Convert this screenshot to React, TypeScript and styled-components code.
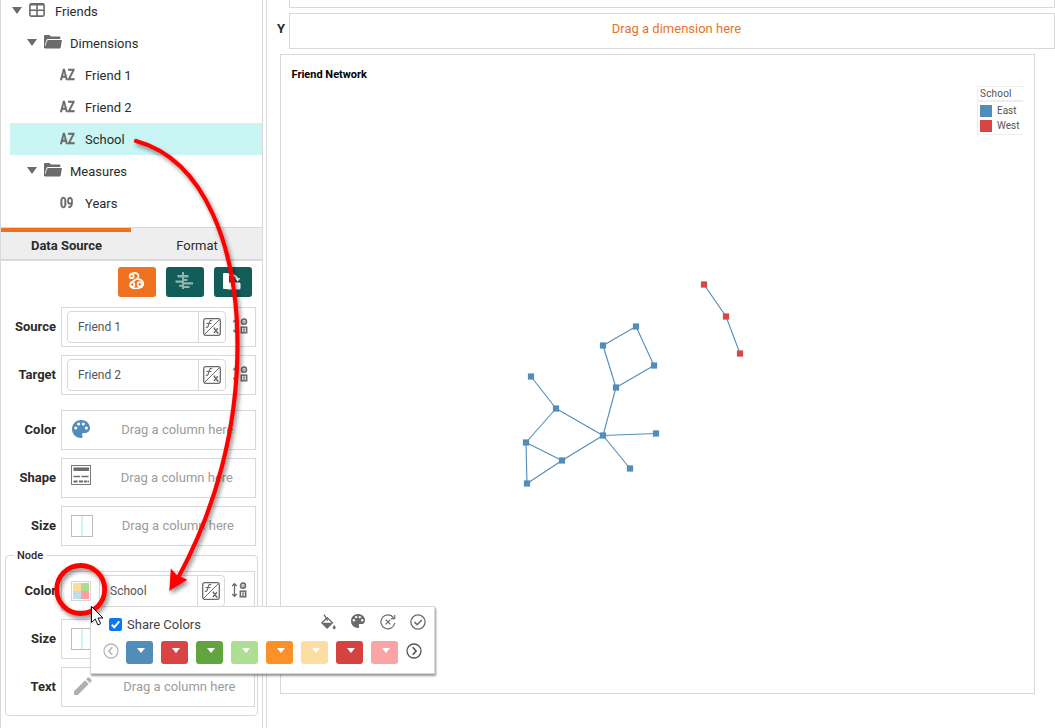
import React from "react";
import styled, { createGlobalStyle, css } from "styled-components";

const line = "#d9d9d9";
const grey = "#6b6b6b";
const blue = "#518db9";
const red = "#d74644";

const GlobalStyle = createGlobalStyle`
  * { box-sizing: border-box; }
  body {
    margin: 0;
    overflow: hidden;
    background: #fff;
    color: #2b2b2b;
    font: 13px/16px Roboto, "Liberation Sans", sans-serif;
  }
  svg { display: block; flex: none; }
`;

const Page = styled.div`
  position: relative;
  display: flex;
  width: 1055px;
  height: 728px;
  overflow: hidden;
`;

const Sidebar = styled.aside`
  width: 263px;
  height: 728px;
  flex: none;
  border: solid ${line};
  border-width: 0 1px;
  overflow: hidden;
`;

const Tree = styled.div`
  height: 227px;
  padding-left: 9px;
  overflow: hidden;
`;

const TreeList = styled.div`
  margin-top: -5px;
`;

const TreeRow = styled.div<{ $level: number; $selected?: boolean }>`
  display: flex;
  align-items: center;
  height: 32px;
  padding-left: ${(p) => [2, 17, 50][p.$level]}px;
  background: ${(p) => (p.$selected ? "#caf5f5" : "transparent")};
`;

const Twisty = styled.span`
  width: 10px;
  height: 7px;
  margin: 0 7px 1px 0;
  flex: none;
  background: ${grey};
  clip-path: polygon(0 0, 100% 0, 50% 100%);
`;

const TreeIcon = styled.span`
  margin-bottom: 2px;
`;

const TreeText = styled.span<{ $gap: number }>`
  margin-left: ${(p) => p.$gap}px;
  padding-top: 1px;
`;

const TypeMark = styled.span`
  width: 25px;
  flex: none;
  color: ${grey};
  font-size: 14px;
  font-weight: 700;
  transform: scaleX(0.83);
  transform-origin: 0 50%;
  -webkit-text-stroke: 0.3px ${grey};
`;

const Tabs = styled.div`
  display: flex;
  height: 34px;
  border: solid ${line};
  border-width: 1px 0 2px;
  background: #eee;
`;

const Tab = styled.div<{ $active?: boolean }>`
  width: ${(p) => (p.$active ? 130 : 131)}px;
  padding-top: ${(p) => (p.$active ? 6 : 10)}px;
  padding-left: 1px;
  text-align: center;
  ${(p) =>
    p.$active &&
    css`
      border-top: 4px solid #ef711d;
      font-weight: 700;
    `}
`;

const ButtonBar = styled.div`
  display: flex;
  justify-content: flex-end;
  gap: 10px;
  padding: 6px 10px 10px 0;
`;

const ToolButton = styled.button<{ $primary?: boolean }>`
  display: flex;
  align-items: center;
  justify-content: center;
  width: 38px;
  height: 30px;
  padding: 0 2px 2px 0;
  border: 0;
  border-radius: 3px;
  background: ${(p) => (p.$primary ? "#ee7220" : "#125d57")};
`;

const FieldStack = styled.div<{ $top?: number }>`
  display: flex;
  flex-direction: column;
  gap: 8px;
  margin-top: ${(p) => p.$top ?? 0}px;
`;

const FieldRow = styled.div`
  display: flex;
  align-items: center;
  height: 40px;
`;

const FieldLabel = styled.label<{ $width: number }>`
  width: ${(p) => p.$width}px;
  padding-right: 5px;
  flex: none;
  font-weight: 700;
  text-align: right;
`;

const DropBox = styled.div<{ $width: number; $filled?: boolean }>`
  display: flex;
  align-items: center;
  width: ${(p) => p.$width}px;
  height: 40px;
  padding-left: ${(p) => (p.$filled ? 5 : 9)}px;
  border: 1px solid ${line};
`;

const FieldIcon = styled.span<{ $left: number; $lift: number }>`
  margin: 0 0 ${(p) => p.$lift * 2}px ${(p) => p.$left}px;
`;

const Placeholder = styled.span<{ $right: number }>`
  margin-left: auto;
  margin-right: ${(p) => p.$right}px;
  color: #9c9c9c;
`;

const ColumnBox = styled.div`
  display: flex;
  width: 159px;
  height: 32px;
  border: 1px solid ${line};
  border-radius: 4px;
`;

const ColumnName = styled.span`
  width: 131px;
  padding: 7px 0 0 10px;
  border-right: 1px solid ${line};
  color: #555;
  font-size: 12px;
`;

const FxSlot = styled.span`
  display: flex;
  flex: 1;
  align-items: center;
  justify-content: center;
`;

const SortSlot = styled.span`
  margin: 0 0 2px 7px;
`;

const NodeGroup = styled.section`
  width: 253px;
  height: 161px;
  margin: 9px 0 0 4px;
  border: 1px solid ${line};
  border-radius: 4px;
`;

const NodeLegend = styled.h3`
  width: 33px;
  height: 14px;
  margin: -7px 0 0 8px;
  padding-left: 3px;
  background: #fff;
  font-size: 11px;
  font-weight: 500;
  line-height: 14px;
`;

const NodeColumn = styled(ColumnBox)`
  width: 126px;
`;

const NodeColumnName = styled(ColumnName)`
  width: 98px;
  padding-left: 10px;
`;

const PaletteSlot = styled.span`
  width: 32px;
  padding-left: 4px;
  flex: none;
`;

const Main = styled.main`
  display: flex;
  flex-direction: column;
  width: 789px;
  height: 728px;
  margin-left: 3px;
  border-left: 1px solid ${line};
`;

const ShelfX = styled.div`
  height: 8px;
  margin-left: 22px;
  border: solid ${line};
  border-width: 0 1px 1px;
`;

const ShelfRow = styled.div`
  display: flex;
  align-items: center;
  height: 36px;
  margin-top: 5px;
`;

const ShelfLabel = styled.b`
  width: 22px;
  padding: 0 0 5px 10px;
`;

const Shelf = styled.div`
  flex: 1;
  height: 36px;
  padding-top: 7px;
  border: 1px solid ${line};
  color: #e8731f;
  text-align: center;
  padding-left: 9px;
`;

const Chart = styled.section`
  position: relative;
  width: 755px;
  height: 640px;
  margin: 5px 0 0 13px;
  border: 1px solid ${line};
`;

const ChartTitle = styled.h2`
  height: 38px;
  margin: 0;
  padding: 12px 0 0 10.5px;
  color: #000;
  font-size: 11px;
  font-weight: 700;
  line-height: 16px;
`;

const Legend = styled.div`
  position: absolute;
  top: 31px;
  left: 696px;
  width: 46px;
  height: 49px;
  border: solid #eee;
  border-width: 1px 0 1px 1px;
  color: #555;
  font-size: 10px;
  line-height: 13px;
`;

const LegendTitle = styled.div`
  height: 15px;
  padding-left: 2px;
  border-bottom: 2px solid #eee;
  letter-spacing: 0.2px;
`;

const LegendItem = styled.div`
  display: flex;
  align-items: center;
  gap: 5px;
  height: 15px;
  padding-left: 2px;
`;

const LegendKey = styled.i<{ $color: string }>`
  width: 12px;
  height: 12px;
  background: ${(p) => p.$color};
`;

const LegendItems = styled.div`
  padding-top: 1px;
`;

const Popup = styled.div`
  position: absolute;
  left: 90px;
  top: 606px;
  width: 345px;
  height: 68px;
  border: 1px solid ${line};
  background: #fff;
  box-shadow: 1px 2px 2px rgba(0, 0, 0, 0.4);
`;

const PopupTop = styled.div`
  display: flex;
  align-items: center;
  height: 32px;
  padding: 2px 8px 0 18px;
`;

const CheckBox = styled.span`
  width: 13px;
  height: 13px;
  border-radius: 2px;
  background: #0b76f5;
  margin-top: 1px;
`;

const ShareText = styled.span`
  margin-left: 5px;
  padding-top: 2px;
  color: #444;
`;

const PopupIcons = styled.div`
  display: flex;
  gap: 14px;
  margin: -5px 0 0 auto;
`;

const PopupPalette = styled.span`
  width: 16px;
  padding-left: 1px;
`;

const SwatchRow = styled.div`
  display: flex;
  gap: 8px;
  padding: 2px 0 0 12px;
`;

const Swatch = styled.button<{ $color: string }>`
  display: flex;
  align-items: flex-start;
  width: 27px;
  height: 23px;
  padding: 7px 0 0 11px;
  border: 0;
  border-radius: 3px;
  background: ${(p) => p.$color};
  &::after {
    content: "";
    width: 8px;
    height: 5px;
    background: #fff;
    clip-path: polygon(0 0, 100% 0, 50% 100%);
  }
`;

const Pager = styled.span`
  width: 15px;
  padding-top: 2px;
`;

const Annotations = styled.svg`
  position: absolute;
  left: 0;
  top: 0;
  pointer-events: none;
`;

const TableIcon = () => (
  <svg width="16" height="14" viewBox="0 0 16 14" fill="none" stroke={grey} strokeWidth="1.6">
    <rect x=".9" y=".9" width="14.2" height="12.2" rx="1.3" />
    <path d="M1 1.7h14" strokeWidth="1.6" />
    <path d="M8 1v12M1 7.2h14" />
  </svg>
);

const FolderIcon = () => (
  <svg width="18" height="14" viewBox="0 0 18 14" fill={grey}>
    <path d="M0 13V1Q0 0 1 0H5.500L7 1.500H15.500Q16.300 1.500 16.300 2.400V4H4Q3 4 2.600 5L1 9.500V13Z" />
    <path d="M4.200 4.900H17.900L16.700 12.600Q16.500 13.600 15.500 13.600H1.200Q.2 13.600.7 12.500L3.300 5.600Q3.600 4.900 4.200 4.900Z" />
  </svg>
);

const FxIcon = () => (
  <svg width="18" height="18" viewBox="0 0 18 18" fill="none" stroke={grey}>
    <rect x=".7" y=".7" width="16.6" height="16.6" rx="2" strokeWidth="1.3" />
    <path d="M1.5 16.5 16.5 1.5" strokeWidth="1" />
    <path d="M9.2 2.6q-2.200-.6-2.800 1.600L5.200 8.200Q4.800 9.700 2.900 9.300M3.500 5.500h5" strokeWidth="1.2" />
    <path d="m11.200 10.300 3.500 4.700M14.900 10.300l-4 4.700M10.500 10.300h1.700M13.800 15h1.800" strokeWidth="1.4" />
  </svg>
);

const SortIcon = () => (
  <svg width="16" height="16" viewBox="0 0 16 16" fill="none" stroke={grey}>
    <path d="M2.500 2v12M.2 4 2.500 1.700 4.800 4M.2 12l2.300 2.300L4.800 12" strokeWidth="1.3" />
    <rect x="8.600" y="1.200" width="4.800" height="5" rx="2.200" strokeWidth="1.7" />
    <path d="M11 2.600v2.300" strokeWidth="1" />
    <rect x="8.300" y="9.200" width="5.400" height="5.600" strokeWidth="1.5" />
    <path d="M9.700 10.900h2.400v1.200h-1.800v1.300h2" strokeWidth=".8" />
  </svg>
);

const PaletteIcon = ({ size = 18, color = blue }: { size?: number; color?: string }) => (
  <svg width={size} height={size} viewBox="0 0 18 18">
    <path
      fill={color}
      d="M9 0C4 0 0 4 0 9s4 9 9 9c1 0 1.6-.7 1.6-1.6 0-.9-.6-1.2-.6-2 0-.9.7-1.5 1.5-1.5h2c2.5 0 4.5-2 4.5-4.7C18 3.500 14 0 9 0Z"
    />
    <g fill="#fff">
      <circle cx="3.700" cy="8" r="1.500" />
      <circle cx="6.600" cy="4" r="1.500" />
      <circle cx="11.300" cy="4" r="1.500" />
      <circle cx="14.400" cy="8" r="1.500" />
    </g>
  </svg>
);

const ShapeIcon = () => (
  <svg width="20" height="20" viewBox="0 0 20 20" fill="none" stroke={grey}>
    <rect x=".5" y=".5" width="19" height="19" stroke="#777" />
    <path d="M2.500 4.200h15.500" strokeWidth="3.500" />
    <path d="M2.500 11.500h6.500M10.500 11.500h7" strokeWidth="1.600" />
    <path d="M2.500 16.500h4M8 16.500h4M13 16.500h2.800M16.500 16.500h1.400" strokeWidth="1.800" />
  </svg>
);

const SizeIcon = () => (
  <svg width="22" height="22" viewBox="0 0 22 22">
    <rect x=".5" y=".5" width="21" height="21" fill="#fff" stroke="#bdbdbd" />
    <path d="M11 1v20" stroke="#caf5f5" strokeWidth="2" />
  </svg>
);

const PencilIcon = () => (
  <svg width="18" height="18" viewBox="0 0 20 20" fill="#b0b0b0">
    <path d="M0 20v-4.200L12.300 3.500l4.200 4.200L4.200 20ZM13.400 2.400l1.600-1.600q1.100-1 2.200 0l2 2q1 1.100 0 2.200L17.600 6.600Z" />
  </svg>
);

const QuadIcon = () => (
  <svg width="20" height="20" viewBox="0 0 20 20">
    <rect x=".5" y=".5" width="19" height="19" fill="#fff" stroke="#d5d5d5" />
    <path d="M2 2h8v8H2Z" fill="#fddb98" />
    <path d="M10 2h8v8h-8Z" fill="#abdd8f" />
    <path d="M2 10h8v8H2Z" fill="#bedeea" />
    <path d="M10 10h8v8h-8Z" fill="#fc9f9e" />
  </svg>
);

const NetworkIcon = () => (
  <svg width="18" height="18" viewBox="0 0 18 18" fill="none" stroke="#fff" strokeWidth="1.7">
    <circle cx="4.600" cy="4.200" r="2" />
    <circle cx="5.300" cy="12.600" r="2.100" />
    <circle cx="12.700" cy="12.300" r="2.100" />
    <path d="M3.200 2.700Q7-.4 10.400 1.800q2.400 2.600-.6 5L3.500 11M9.600 6.800q6.600.6 6.800 5-.3 4.400-7.200 4.700-6.300-.1-6-3.500" />
  </svg>
);

const GanttIcon = () => (
  <svg width="18" height="18" viewBox="0 0 18 18" fill="#8db6b1">
    <path d="M7 0h2v17H7ZM2.500 3H7v2.500H2.500ZM9 3h4.500v2.500H9ZM9 7h3.500v2H9ZM.5 8.500H7v2.300H.5ZM9 10.300h9v2.300H9ZM4 12.800h3v2H4ZM9 14h5.500v2H9Z" />
  </svg>
);

const SwapIcon = () => (
  <svg width="20" height="20" viewBox="0 0 20 20" fill="#fff">
    <rect x="1" y="2" width="6" height="16" rx="1" />
    <rect x="5" y="11.500" width="13.500" height="7" rx="1.500" />
    <path d="M9 4.100q5.800-.2 6.600 5" stroke="#fff" strokeWidth="1.800" fill="none" />
    <path d="M10 1v6L6.500 4Z" />
    <path d="M13 7.300h5.400l-2.700 3.200Z" />
  </svg>
);

const BucketIcon = () => (
  <svg width="16" height="16" viewBox="0 0 16 16" fill="none" stroke={grey}>
    <path d="m7.300 3.700 5.200 5.100-5.400 5.300-5.300-5.300ZM4 .7l3.600 6" strokeWidth="1.3" />
    <path d="M2 8.800h10.500l-5.400 5.300Z" fill={grey} stroke="none" />
    <path d="M14.200 10.800q3 4.400 0 4.400t0-4.400Z" fill={grey} stroke="none" />
  </svg>
);

const ResetIcon = () => (
  <svg width="16" height="16" viewBox="0 0 16 16" fill="none" stroke={grey} strokeWidth="1.2">
    <path d="M13.600 3.800A7 7 0 1 0 14.800 9M14.700 1v3.700H11M5.600 5.600l4.800 4.800M10.400 5.600l-4.800 4.800" />
  </svg>
);

const ApplyIcon = () => (
  <svg width="16" height="16" viewBox="0 0 16 16" fill="none" stroke={grey} strokeWidth="1.3">
    <circle cx="8" cy="8" r="7.100" />
    <path d="m4.500 8.200 2.600 2.500L11.900 6" strokeWidth="1.600" />
  </svg>
);

const PageIcon = ({ back }: { back?: boolean }) => (
  <svg width="16" height="16" viewBox="0 0 16 16" fill="none" stroke={back ? "#b8b8b8" : "#555"} strokeWidth="1.3">
    <circle cx="8" cy="8" r="7" />
    <path d={back ? "M9.300 4.200 5.900 8l3.400 3.800" : "M6.700 4.200 10.100 8l-3.400 3.800"} strokeWidth="1.700" />
  </svg>
);

const points: [number, number][] = [
  [636, 326.5], [603, 345.5], [654, 365.5], [616, 387.5], [531, 376.5], [556, 408.5],
  [526, 442.5], [562, 460.5], [527, 483.5], [603, 435.5], [656, 433.5], [630, 468.5],
  [704, 284.5], [726, 316.5], [740, 353.5],
];
const edges = [
  [0, 1], [0, 2], [1, 3], [2, 3], [3, 9], [9, 10], [9, 11], [9, 5], [9, 7],
  [5, 4], [5, 6], [6, 7], [6, 8], [7, 8], [12, 13], [13, 14],
];

const Network = () => (
  <svg width="753" height="600" viewBox="281 93 753 600">
    {edges.map(([a, b]) => (
      <line
        key={`${a}-${b}`}
        x1={points[a][0]}
        y1={points[a][1]}
        x2={points[b][0]}
        y2={points[b][1]}
        stroke={blue}
        strokeWidth="1.1"
      />
    ))}
    {points.map(([x, y], i) => (
      <rect key={i} x={x - 3.1} y={y - 3.1} width="6.2" height="6.2" fill={i > 11 ? red : blue} />
    ))}
  </svg>
);

const ColumnField = ({ label, name }: { label: string; name: string }) => (
  <FieldRow>
    <FieldLabel $width={60}>{label}</FieldLabel>
    <DropBox $width={195} $filled>
      <ColumnBox>
        <ColumnName>{name}</ColumnName>
        <FxSlot><FxIcon /></FxSlot>
      </ColumnBox>
      <SortSlot><SortIcon /></SortSlot>
    </DropBox>
  </FieldRow>
);

type EmptyFieldProps = {
  label: string;
  icon: React.ReactNode;
  iconLeft?: number;
  iconLift?: number;
  textRight?: number;
  inGroup?: boolean;
};

const EmptyField = ({ label, icon, iconLeft = 0, iconLift = 0, textRight = 21.5, inGroup }: EmptyFieldProps) => (
  <FieldRow>
    <FieldLabel $width={inGroup ? 55 : 60}>{label}</FieldLabel>
    <DropBox $width={inGroup ? 194 : 195}>
      <FieldIcon $left={iconLeft} $lift={iconLift}>{icon}</FieldIcon>
      <Placeholder $right={textRight}>Drag a column here</Placeholder>
    </DropBox>
  </FieldRow>
);

const swatches = [blue, red, "#61a540", "#acdf93", "#fd9128", "#fcdea2", "#d64240", "#fba4a4"];

export default function App() {
  return (
    <Page>
      <GlobalStyle />
      <Sidebar>
        <Tree>
          <TreeList>
            <TreeRow $level={0}><Twisty /><TreeIcon><TableIcon /></TreeIcon><TreeText $gap={10}>Friends</TreeText></TreeRow>
            <TreeRow $level={1}><Twisty /><TreeIcon><FolderIcon /></TreeIcon><TreeText $gap={8}>Dimensions</TreeText></TreeRow>
            <TreeRow $level={2}><TypeMark>AZ</TypeMark><TreeText $gap={0}>Friend 1</TreeText></TreeRow>
            <TreeRow $level={2}><TypeMark>AZ</TypeMark><TreeText $gap={0}>Friend 2</TreeText></TreeRow>
            <TreeRow $level={2} $selected><TypeMark>AZ</TypeMark><TreeText $gap={0}>School</TreeText></TreeRow>
            <TreeRow $level={1}><Twisty /><TreeIcon><FolderIcon /></TreeIcon><TreeText $gap={8}>Measures</TreeText></TreeRow>
            <TreeRow $level={2}><TypeMark>09</TypeMark><TreeText $gap={0}>Years</TreeText></TreeRow>
          </TreeList>
        </Tree>
        <Tabs>
          <Tab $active>Data Source</Tab>
          <Tab>Format</Tab>
        </Tabs>
        <ButtonBar>
          <ToolButton $primary><NetworkIcon /></ToolButton>
          <ToolButton><GanttIcon /></ToolButton>
          <ToolButton><SwapIcon /></ToolButton>
        </ButtonBar>
        <FieldStack>
          <ColumnField label="Source" name="Friend 1" />
          <ColumnField label="Target" name="Friend 2" />
        </FieldStack>
        <FieldStack $top={15}>
          <EmptyField label="Color" icon={<PaletteIcon />} iconLeft={1} iconLift={1} />
          <EmptyField label="Shape" icon={<ShapeIcon />} iconLift={3} textRight={22} />
          <EmptyField label="Size" icon={<SizeIcon />} textRight={21} />
        </FieldStack>
        <NodeGroup>
          <NodeLegend>Node</NodeLegend>
          <FieldStack $top={8}>
            <FieldRow>
              <FieldLabel $width={55}>Color</FieldLabel>
              <DropBox $width={194} $filled>
                <PaletteSlot><QuadIcon /></PaletteSlot>
                <NodeColumn>
                  <NodeColumnName>School</NodeColumnName>
                  <FxSlot><FxIcon /></FxSlot>
                </NodeColumn>
                <SortSlot><SortIcon /></SortSlot>
              </DropBox>
            </FieldRow>
            <EmptyField label="Size" icon={<SizeIcon />} inGroup />
            <EmptyField label="Text" icon={<PencilIcon />} iconLeft={3} iconLift={1} textRight={18.5} inGroup />
          </FieldStack>
        </NodeGroup>
      </Sidebar>
      <Main>
        <ShelfX />
        <ShelfRow>
          <ShelfLabel>Y</ShelfLabel>
          <Shelf>Drag a dimension here</Shelf>
        </ShelfRow>
        <Chart>
          <ChartTitle>Friend Network</ChartTitle>
          <Network />
          <Legend>
            <LegendTitle>School</LegendTitle>
            <LegendItems>
              <LegendItem><LegendKey $color={blue} />East</LegendItem>
              <LegendItem><LegendKey $color={red} />West</LegendItem>
            </LegendItems>
          </Legend>
        </Chart>
      </Main>
      <Popup>
        <PopupTop>
          <CheckBox>
            <svg width="13" height="13" viewBox="0 0 13 13" fill="none" stroke="#fff" strokeWidth="2">
              <path d="m2.800 6.800 2.500 2.500 4.900-6" />
            </svg>
          </CheckBox>
          <ShareText>Share Colors</ShareText>
          <PopupIcons>
            <BucketIcon />
            <PopupPalette><PaletteIcon size={14} color={grey} /></PopupPalette>
            <ResetIcon />
            <ApplyIcon />
          </PopupIcons>
        </PopupTop>
        <SwatchRow>
          <Pager><PageIcon back /></Pager>
          {swatches.map((c, i) => <Swatch key={i} $color={c} />)}
          <Pager><PageIcon /></Pager>
        </SwatchRow>
      </Popup>
      <Annotations width="1055" height="728" viewBox="0 0 1055 728">
        <defs>
          <filter id="shade" x="-20%" y="-20%" width="150%" height="150%">
            <feDropShadow dx="2" dy="3" stdDeviation="2" floodColor="#000" floodOpacity=".45" />
          </filter>
        </defs>
        <g filter="url(#shade)" fill="none" stroke="#f00">
          <path d="M136 141C206 160 237.500 250 237.500 345C237.500 430 215 510 178 578" strokeWidth="4.2" strokeLinecap="round" />
          <path d="m169.300 591 1.500-22.500 6 6.500 10.500 4.700Z" fill="#f00" stroke="none" />
          <circle cx="80.700" cy="589.500" r="24" strokeWidth="4.8" />
        </g>
        <path
          d="M91.500 606.500v16l3.700-3.500 2.700 6 2.800-1.300-2.700-5.700h5Z"
          fill="#fff"
          stroke="#111"
          strokeWidth="1"
        />
      </Annotations>
    </Page>
  );
}
